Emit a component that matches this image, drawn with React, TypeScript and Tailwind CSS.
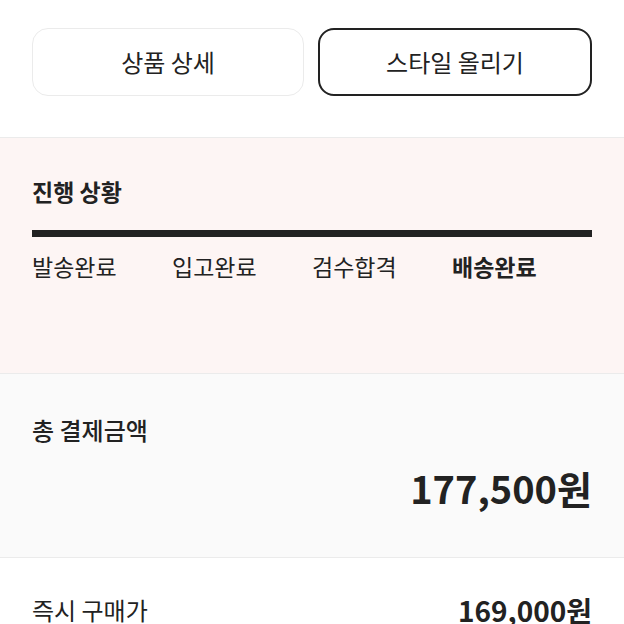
const font = "font-['Noto_Sans_CJK_KR','Noto_Sans',sans-serif]";

const steps = [
  { label: "발송완료", active: false },
  { label: "입고완료", active: false },
  { label: "검수합격", active: false },
  { label: "배송완료", active: true },
];

export default function App() {
  return (
    <div className={`${font} w-[624px] h-[624px] overflow-hidden bg-white text-[#222]`}>
      {/* Action buttons */}
      <div className="flex gap-[14px] px-8 pt-[28px] pb-[41px] border-b border-[#ebebeb]">
        <button className="flex h-[68px] flex-1 items-center justify-center rounded-2xl border border-[#ebebeb] bg-white text-[24px] text-[#222]">
          상품 상세
        </button>
        <button className="flex h-[68px] flex-1 items-center justify-center rounded-2xl border-2 border-[#222] bg-white text-[24px] text-[#222]">
          스타일 올리기
        </button>
      </div>

      {/* Progress */}
      <section className="h-[236px] border-b border-[#ebebeb] bg-[#fdf5f4] px-8 pt-[38px]">
        <h3 className="text-[23px] font-bold leading-[30px]">진행 상황</h3>
        <div className="mt-[24px] h-[7px] bg-[#222]" />
        <div className="mt-[14px] grid grid-cols-4">
          {steps.map((s) => (
            <span
              key={s.label}
              className={`text-[23px] leading-[30px] ${s.active ? "font-bold" : "font-normal"}`}
            >
              {s.label}
            </span>
          ))}
        </div>
      </section>

      {/* Total */}
      <section className="h-[184px] border-b border-[#ebebeb] bg-[#fafafa] px-8 pt-[40px]">
        <p className="text-[24px] font-medium leading-[32px]">총 결제금액</p>
        <p className="mt-[18px] text-right text-[38px] font-bold leading-[48px]">177,500원</p>
      </section>

      <div className="flex items-center justify-between px-8 pt-[36px]">
        <span className="text-[24px] leading-[32px]">즉시 구매가</span>
        <span className="text-[28px] font-bold leading-[32px]">169,000원</span>
      </div>
    </div>
  );
}
